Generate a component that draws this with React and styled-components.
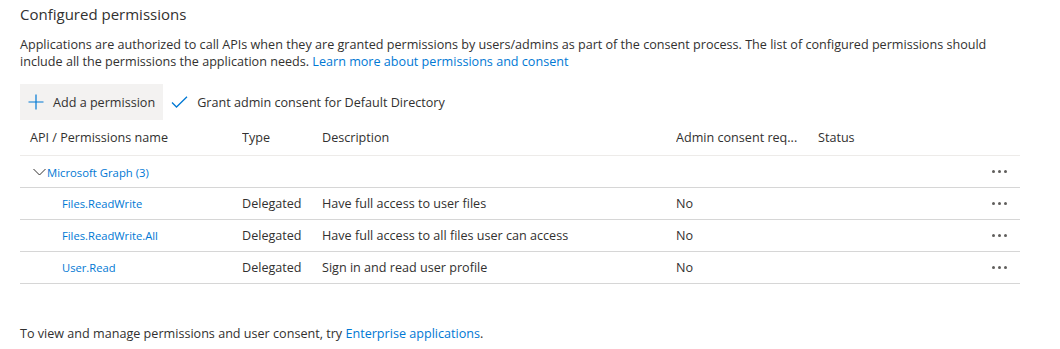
import styled, { createGlobalStyle } from "styled-components";

const GlobalStyle = createGlobalStyle`
  body {
    margin: 0;
    background: #fff;
    font-family: "Open Sans", "Noto Sans", sans-serif;
    color: #323130;
  }
`;

const Page = styled.div`
  padding: 3px 40px 0 20px;
  width: 1000px;
`;

const Title = styled.h2`
  margin: 0;
  font-size: 15px;
  font-weight: 400;
  line-height: 22px;
  color: #323130;
`;

const Intro = styled.p`
  margin: 11px 0 0;
  font-size: 12.6px;
  line-height: 17px;
`;

const Link = styled.a`
  color: #0078d4;
  text-decoration: none;
  cursor: pointer;
`;

const NameLink = styled(Link)`
  font-size: 11.2px;
`;

const Toolbar = styled.div`
  display: flex;
  align-items: center;
  margin-top: 14px;
  height: 36px;
`;

const ToolButton = styled.button`
  display: flex;
  align-items: center;
  gap: 9px;
  height: 36px;
  padding: 0 8px;
  border: 0;
  background: ${(p) => (p.$active ? "#f3f2f1" : "transparent")};
  font: inherit;
  font-size: 12.6px;
  color: #323130;
  cursor: pointer;
`;

const Table = styled.div`
  width: 1000px;
`;

const Row = styled.div`
  display: grid;
  grid-template-columns: 222px 80px 354px 142px 1fr 40px;
  align-items: center;
  height: ${(p) => (p.$head ? "35px" : "31px")};
  border-bottom: 1px solid ${(p) => (p.$head ? "#edebe9" : "#d6d6d6")};
  font-size: 12.6px;
`;

const Cell = styled.div`
  white-space: nowrap;
  overflow: hidden;
  padding-left: ${(p) => p.$indent || 0}px;
`;

const GroupName = styled.span`
  display: inline-flex;
  align-items: center;
  gap: 1px;
  font-size: 11.3px;
  color: #0078d4;
`;

const More = styled.div`
  display: flex;
  justify-content: flex-end;
  gap: 3px;
  padding-right: 13px;
  span {
    width: 3px;
    height: 3px;
    border-radius: 50%;
    background: #605e5c;
  }
`;

const Footer = styled.p`
  margin: 41px 0 0;
  font-size: 12.6px;
  line-height: 17px;
`;

const PlusIcon = () => (
  <svg width="16" height="16" viewBox="0 0 16 16">
    <path d="M8 0.5v15M0.5 8h15" stroke="#0078d4" strokeWidth="1.2" fill="none" />
  </svg>
);

const CheckIcon = () => (
  <svg width="17" height="12" viewBox="0 0 17 12">
    <path d="M1 6.5l4.5 4.5L16 0.8" stroke="#0078d4" strokeWidth="1.3" fill="none" />
  </svg>
);

const Chevron = () => (
  <svg width="13" height="8" viewBox="0 0 13 8">
    <path d="M0.5 1l6 6 6-6" stroke="#323130" strokeWidth="1" fill="none" />
  </svg>
);

const Dots = () => (
  <More>
    <span />
    <span />
    <span />
  </More>
);

const permissions = [
  { name: "Files.ReadWrite", desc: "Have full access to user files" },
  { name: "Files.ReadWrite.All", desc: "Have full access to all files user can access" },
  { name: "User.Read", desc: "Sign in and read user profile" },
];

export default function App() {
  return (
    <Page>
      <GlobalStyle />
      <Title>Configured permissions</Title>
      <Intro>
        Applications are authorized to call APIs when they are granted permissions by users/admins as
        part of the consent process. The list of configured permissions should include all the
        permissions the application needs. <Link>Learn more about permissions and consent</Link>
      </Intro>

      <Toolbar>
        <ToolButton $active>
          <PlusIcon />
          Add a permission
        </ToolButton>
        <ToolButton>
          <CheckIcon />
          Grant admin consent for Default Directory
        </ToolButton>
      </Toolbar>

      <Table>
        <Row $head>
          <Cell $indent={10}>API / Permissions name</Cell>
          <Cell>Type</Cell>
          <Cell>Description</Cell>
          <Cell>Admin consent req...</Cell>
          <Cell>Status</Cell>
          <Cell />
        </Row>
        <Row>
          <Cell $indent={13}>
            <GroupName>
              <Chevron />
              Microsoft Graph (3)
            </GroupName>
          </Cell>
          <Cell />
          <Cell />
          <Cell />
          <Cell />
          <Dots />
        </Row>
        {permissions.map((p) => (
          <Row key={p.name}>
            <Cell $indent={42}>
              <NameLink>{p.name}</NameLink>
            </Cell>
            <Cell>Delegated</Cell>
            <Cell>{p.desc}</Cell>
            <Cell>No</Cell>
            <Cell />
            <Dots />
          </Row>
        ))}
      </Table>

      <Footer>
        To view and manage permissions and user consent, try <Link>Enterprise applications</Link>.
      </Footer>
    </Page>
  );
}
